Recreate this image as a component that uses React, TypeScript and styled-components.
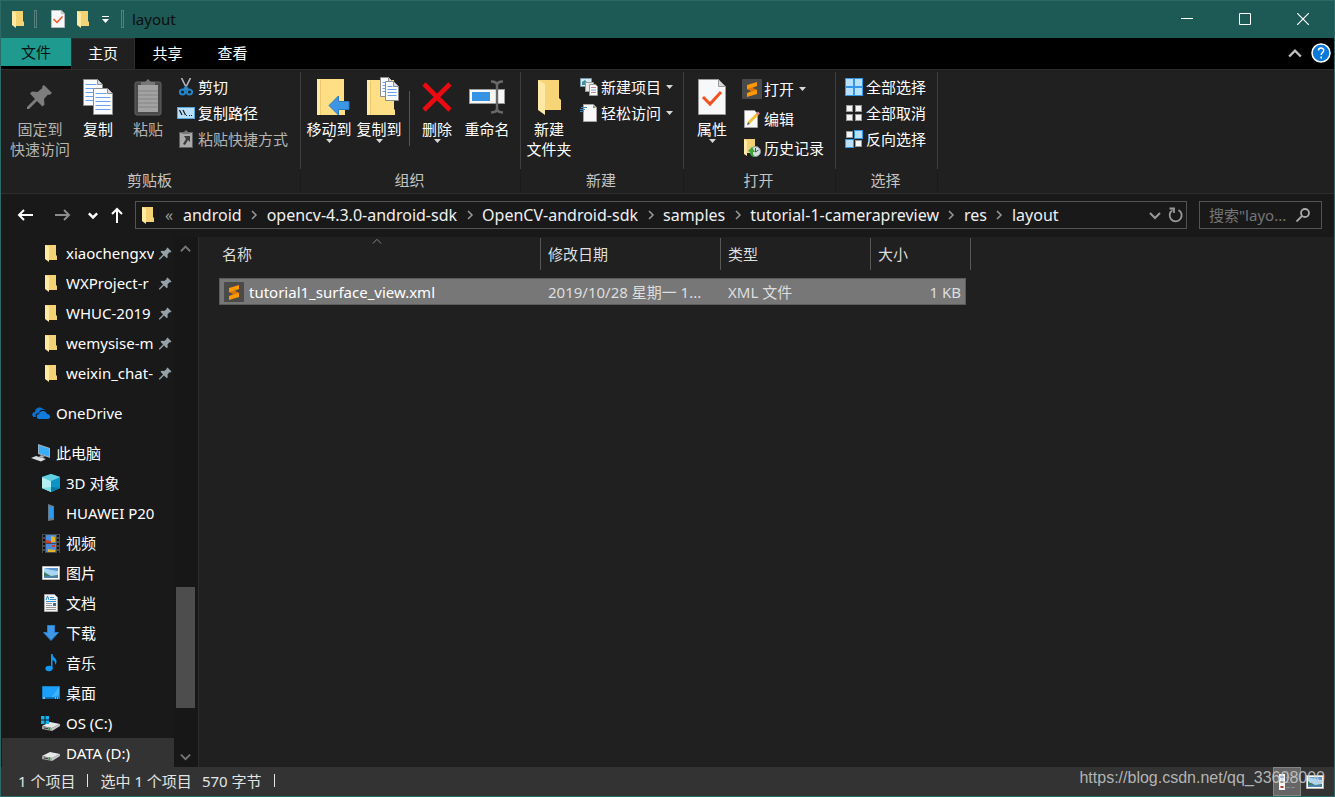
import React from "react";
import styled, { createGlobalStyle, css } from "styled-components";

const GlobalStyle = createGlobalStyle`
  *, *::before, *::after { box-sizing: border-box; }
  body {
    margin: 0;
    background: #202020;
    color: #fff;
    font: 15px/20px "Noto Sans", "Noto Sans CJK SC", sans-serif;
  }
  button, input {
    margin: 0;
    padding: 0;
    border: 0;
    background: none;
    color: inherit;
    font: inherit;
  }
  svg { display: block; flex: none; }
`;

/* ---------- icons ---------- */

const FolderIcon = () => (
  <svg width="14" height="18" viewBox="0 0 14 18">
    <path d="M1 1h11v10l1 1v4H4z" fill="#f5d375" />
    <path d="M1 1l4 2v15l-4-3z" fill="#ffe9a3" />
  </svg>
);

const CheckDocIcon = ({ width = 14, height = 18 }: { width?: number; height?: number }) => (
  <svg width={width} height={height} viewBox="0 0 28 36">
    <path d="M.5.5h20l7 7v28H.5z" fill="#f7f8fa" stroke="#9a9a9a" />
    <path d="M20.500.5v7h7z" fill="#d5d9dc" stroke="#9a9a9a" />
    <path d="M5 18l7 7L23 13" fill="none" stroke="#f4511e" strokeWidth="3" />
  </svg>
);

const Pin = ({ size, color }: { size: number; color: string }) => (
  <svg width={size} height={size} viewBox="0 0 26 26">
    <path
      d="M17 1l8 8-2.500 2-1.500-.5-4 4.500.5 5.500-2 2-5.500-5.500L2 25H0v-2l8-8-5-5.500 2-2 5.500.5 5-4-.5-1.500z"
      fill={color}
    />
  </svg>
);

const PageLines = ({ x, y, w, h, step = 4 }: { x: number; y: number; w: number; h: number; step?: number }) => {
  const lines: number[] = [];
  for (let v = y + 5; v < y + h - 2; v += step) lines.push(v);
  return (
    <g>
      <path d={`M${x} ${y}h${w - 5}l5 5v${h - 5}h-${w}z`} fill="#fafbfc" stroke="#8e8e8e" />
      <path d={`M${x + w - 5} ${y}v5h5`} fill="#d6dade" stroke="#8e8e8e" />
      {lines.map((v) => (
        <path key={v} d={`M${x + 2} ${v}h${v < y + 6 ? w - 8 : w - 4}`} stroke="#6ba0ee" strokeWidth="1" />
      ))}
    </g>
  );
};

const CopyIcon = () => (
  <svg width="32" height="38" viewBox="0 0 32 38">
    <PageLines x={1.5} y={1.5} w={19} h={26} />
    <PageLines x={11.5} y={10.5} w={19} h={26} />
  </svg>
);

const PasteIcon = () => (
  <svg width="28" height="38" viewBox="0 0 28 38">
    <rect x="1" y="4" width="26" height="33" rx="2" fill="#4a4a4a" stroke="#626262" />
    <rect x="4" y="7" width="20" height="27" fill="#a2a2a2" />
    <path d="M4 13h20M4 17h20M4 21h20M4 25h20M4 29h20" stroke="#848484" />
    <path d="M7 7V4h4l3-3 3 3h4v3z" fill="#777" />
  </svg>
);

const ScissorsIcon = () => (
  <svg width="14" height="18" viewBox="0 0 14 18" fill="none">
    <path d="M2.500 0l6 12M11.500 0l-6 12" stroke="#b4bac0" strokeWidth="1.600" />
    <circle cx="3.500" cy="14" r="2.600" stroke="#2186cc" strokeWidth="2" />
    <circle cx="10.500" cy="14" r="2.600" stroke="#2186cc" strokeWidth="2" />
    <path d="M5 11l2-2 2 2" stroke="#2186cc" strokeWidth="2" />
  </svg>
);

const CopyPathIcon = () => (
  <svg width="18" height="12" viewBox="0 0 18 12">
    <rect x=".5" y=".5" width="17" height="11" fill="#b9e0fb" stroke="#5aa7e0" />
    <path d="M2.500 3l2.500 5M6 3l2.500 5" stroke="#222" strokeWidth="1.300" />
    <path d="M9 8h1v1H9zM12 8h1v1h-1zM14 8h1v1h-1z" fill="#222" />
  </svg>
);

const PasteShortcutIcon = () => (
  <svg width="14" height="18" viewBox="0 0 14 18">
    <rect x=".5" y="2.500" width="13" height="15" fill="#aaa" stroke="#5e5e5e" />
    <path d="M3 4V2h2l2-2 2 2h2v2z" fill="#777" />
    <path d="M5 6h6v6L9 10l-3 5-2-1 3-5z" fill="#3b3b3b" />
  </svg>
);

const MoveToIcon = () => (
  <svg width="42" height="38" viewBox="-8 0 42 38">
    <path d="M1 1h27v30l1 1v5H1z" fill="#ffdf86" />
    <path d="M1 1h3v36H1z" fill="#ffeba9" />
    <path d="M4.500 2v35" stroke="#edc86d" />
    <path d="M13 27.500L22.500 18v5.500H33v8H22.500V37z" fill="#3c96e3" stroke="#2779bf" />
  </svg>
);

const CopyToIcon = () => (
  <svg width="42" height="40" viewBox="-8 -1 42 40">
    <path d="M1 2h27v29l1 1v5H1z" fill="#ffdf86" />
    <path d="M1 2h3v35H1z" fill="#ffeba9" />
    <path d="M4.500 3v34" stroke="#edc86d" />
    <PageLines x={14.5} y={-0.5} w={13} h={19} step={3} />
    <PageLines x={19.5} y={3.5} w={13} h={19} step={3} />
  </svg>
);

const DeleteIcon = () => (
  <svg width="30" height="30" viewBox="0 0 30 30">
    <path d="M2 2l26 26M28 2L2 28" stroke="#e90a12" strokeWidth="4.600" />
  </svg>
);

const RenameIcon = () => (
  <svg width="36" height="36" viewBox="0 0 36 36">
    <rect x=".5" y="10.500" width="35" height="14" fill="#f7f7f7" stroke="#999" />
    <rect x="3" y="13" width="18" height="9" fill="#3592e4" />
    <path
      d="M22 2.500c4 0 6 1 6 4v23c0 3-2 4-6 4M34 2.500c-4 0-6 1-6 4M28 29.500c0 3 2 4 6 4"
      fill="none"
      stroke="#686868"
      strokeWidth="2.400"
    />
  </svg>
);

const NewFolderIcon = () => (
  <svg width="24" height="36" viewBox="0 0 24 36">
    <path d="M1 1h21v18l2 2v10H7z" fill="#f7d577" />
    <path d="M1 1l7 4v31l-7-5z" fill="#ffe9a4" />
  </svg>
);

const NewItemIcon = () => (
  <svg width="18" height="18" viewBox="0 0 18 18">
    <path d="M.5.5h11v8H.5z" fill="#d3e9f6" stroke="#7799ac" />
    <path d="M2 7V4l3-2 4 5z" fill="#418d9c" />
    <path d="M5.500 4.500h8v9h-8z" fill="#e9e9e9" stroke="#999" />
    <path d="M9.500 6.500h6l2 2v9h-8z" fill="#fafafa" stroke="#999" />
    <path d="M11 9.500h5M11 14.500h5" stroke="#d28292" />
    <path d="M11 12h5" stroke="#79a6dd" />
  </svg>
);

const EasyAccessIcon = () => (
  <svg width="18" height="18" viewBox="0 0 18 18">
    <path d="M3.500.5h10l3 3v14h-13z" fill="#f8f8f8" stroke="#a4a4a4" />
    <path d="M13 1v3h3z" fill="#888" />
    <path d="M1 3.500h6M0 5.500h5M0 7.500h4" stroke="#3a86bd" />
  </svg>
);

const SublimeIcon = () => (
  <svg width="20" height="20" viewBox="0 0 20 20">
    <rect width="20" height="20" rx="1" fill="#4a4a4a" />
    <path d="M15 3v4l-5 2 5 2v4L5 18v-4l5-2-5-2V6z" fill="#ff9800" />
    <path d="M5 10l5-1.500 5 2.500-5 1.500z" fill="#d97706" />
  </svg>
);

const EditIcon = () => (
  <svg width="18" height="18" viewBox="0 0 18 18">
    <path d="M1.500.5h10l3 3v14h-13z" fill="#fafafa" stroke="#a0a0a0" />
    <path d="M4.500 14.500l1-3.500 8-8 2 2-8 8z" fill="#f3c32f" />
    <path d="M13 3.500l2-2 2 2-2 2z" fill="#d8848c" />
    <path d="M4 15l1-3 2 2z" fill="#555" />
  </svg>
);

const HistoryIcon = () => (
  <svg width="18" height="18" viewBox="0 0 18 18">
    <path d="M1 0h11v14H4z" fill="#f2d074" />
    <path d="M1 0l3 2v15l-3-2z" fill="#ffe9a4" />
    <circle cx="12.500" cy="12.500" r="5" fill="#d9dcde" stroke="#899" />
    <path d="M12.500 9v4l3-2" fill="none" stroke="#456" />
    <path d="M9 8l-4 4 2 1c0 3 2 5 5 5-2-2-2-3-2-5h2z" fill="#3ba63b" />
  </svg>
);

const SelectIcon = ({ on }: { on: boolean[] }) => (
  <svg width="18" height="18" viewBox="0 0 18 18">
    {on.map((blue, i) => {
      const x = (i % 2) * 9;
      const y = Math.floor(i / 2) * 9;
      return blue ? (
        <rect key={i} x={x + 0.5} y={y + 0.5} width="8" height="8" fill="#b8e0fc" stroke="#3397e6" />
      ) : (
        <rect key={i} x={x + 1.5} y={y + 1.5} width="6" height="6" fill="#f6f6f6" stroke="#999" />
      );
    })}
  </svg>
);

const HelpIcon = () => (
  <svg width="20" height="20" viewBox="0 0 20 20">
    <circle cx="10" cy="10" r="9" fill="#0a78d8" stroke="#fff" strokeWidth="1.500" />
    <path
      d="M7.500 7.500C7.500 4.300 12.700 4.300 12.700 7.400c0 2-2.500 2.300-2.500 4.600M10.200 13.500v2"
      fill="none"
      stroke="#fff"
      strokeWidth="1.500"
    />
  </svg>
);

type ChevronProps = { dir: "up" | "down" | "right"; size?: number; color?: string; weight?: number };

const Chevron = ({ dir, size = 12, color = "#fff", weight = 2 }: ChevronProps) => (
  <svg width={size} height={size} viewBox="0 0 12 12" fill="none" stroke={color} strokeWidth={weight}>
    <path d={{ up: "M1 9l5-5 5 5", down: "M1 4l5 5 5-5", right: "M4 2l4 4-4 4" }[dir]} />
  </svg>
);

const ArrowIcon = ({ dir, color = "#fff" }: { dir: "left" | "right" | "up"; color?: string }) => (
  <svg width="16" height="16" viewBox="0 0 16 16" fill="none" stroke={color} strokeWidth="2">
    <path d={{ left: "M16 8H2M7 3L2 8l5 5", right: "M0 8h14M9 3l5 5-5 5", up: "M8 16V2M3 7l5-5 5 5" }[dir]} />
  </svg>
);

const Triangle = () => (
  <svg width="7" height="4" viewBox="0 0 7 4">
    <path d="M0 0h7L3.500 4z" fill="#d8d8d8" />
  </svg>
);

const OneDriveIcon = () => (
  <svg width="18" height="12" viewBox="0 0 18 12">
    <path d="M4 10H2C-1 9 0 5 3 5c0-4 5-6 8-3 1 0 2 0 2 1-4-1-6 1-6 3-3 0-4 2-3 4z" fill="#0a6fcf" />
    <path d="M7 12c-3 0-3-5 0-5 1-4 7-4 8 0 4 0 4 5 1 5z" fill="#0f7be0" />
  </svg>
);

const ComputerIcon = () => (
  <svg width="20" height="18" viewBox="0 0 20 18">
    <path d="M7 0l12 4v10L7 10z" fill="#9bb0bd" />
    <path d="M8 1.500l10 3.300v7.700L8 9.200z" fill="#38aefb" />
    <path d="M0 14l5-2 10 3-5 2.500z" fill="#d9dde0" />
    <path d="M10 11l4 2-3 1-3-1z" fill="#aab3b9" />
  </svg>
);

const CubeIcon = () => (
  <svg width="18" height="18" viewBox="0 0 18 18">
    <path d="M9 0l9 3v11l-9 4-9-4V3z" fill="#34b4d4" />
    <path d="M0 3l9 4v11l-9-4z" fill="#b5eef0" />
    <path d="M18 3L9 7v11l9-4z" fill="#0d94c6" />
    <path d="M9 0l9 3-9 4-9-4z" fill="#62d0e2" />
    <path d="M9 13l-9 1 9 4z" fill="#7ddfe4" />
    <path d="M9 13l9 1-9 4z" fill="#0878a6" />
  </svg>
);

const PhoneIcon = () => (
  <svg width="8" height="18" viewBox="0 0 8 18">
    <path d="M1 0l6 2v14l-6 1z" fill="#687884" />
    <path d="M2 2l4 1v11l-4 1z" fill="#269bf5" />
  </svg>
);

const VideoIcon = () => (
  <svg width="18" height="19" viewBox="0 0 18 19">
    <path d="M0 0h18v19H0z" fill="#4c4c4c" />
    <path d="M4 1h10v8H4zM4 10h10v8H4z" fill="#4b8bdc" />
    <path d="M9 2l4 1v5H9z" fill="#e0b52a" />
    <path d="M4 6l5 1v2H4zM10 11h3v2h-3z" fill="#c83c2c" />
    <path d="M6 15l7 1v2H6z" fill="#ddb52e" />
    <path d="M2 1v18M16 1v18" stroke="#101010" strokeWidth="2" strokeDasharray="2 2" />
  </svg>
);

const PictureIcon = () => (
  <svg width="18" height="14" viewBox="0 0 18 14">
    <path d="M.5.5h17v13H.5z" fill="#fff" stroke="#bbb" />
    <path d="M2 2h14v10H2z" fill="#a9d6f5" />
    <path d="M2 2h14v3L9 4z" fill="#5796d2" />
    <path d="M2 6l7 4 7-1v1H2z" fill="#3f7c61" />
    <path d="M2 10h14v2H2z" fill="#4c83ad" />
  </svg>
);

const DocumentIcon = () => (
  <svg width="14" height="18" viewBox="0 0 14 18">
    <path d="M.5.5h10l3 3v14H.5z" fill="#f4f4f4" stroke="#aaa" />
    <path d="M6 3.500h4M6 5.500h6M2 7.500h10" stroke="#2e91d3" />
    <path d="M2 6l1.500-4L5 6" fill="none" stroke="#2e91d3" />
    <path d="M2 9.500h6M2 11.500h6M2 13.500h10M2 15.500h10" stroke="#999" />
    <path d="M9 9h3v3H9z" fill="#3f6e8e" />
  </svg>
);

const DownloadIcon = () => (
  <svg width="16" height="16" viewBox="0 0 16 16">
    <path d="M4.500.5h7v7h4L8 15.500.5 7.500h4z" fill="#3f97e8" stroke="#2b7cc9" />
  </svg>
);

const MusicIcon = () => (
  <svg width="12" height="18" viewBox="0 0 12 18">
    <ellipse cx="4" cy="14.500" rx="3.600" ry="2.800" fill="#0f9bf5" />
    <path d="M6 0h1.500c.5 4 4.500 4 4 8-.2 1.500-.8 2-1.500 3 .5-3-.5-4-2.500-5v9H6z" fill="#0f9bf5" />
  </svg>
);

const DesktopIcon = () => (
  <svg width="18" height="14" viewBox="0 0 18 14">
    <path d="M.5.5h17v12H.5z" fill="#1aa0fb" stroke="#1580cc" />
    <path d="M17 1v8L9 12 17 1z" fill="#41b2ff" />
    <path d="M1 12h16" stroke="#064a80" />
    <path d="M1 12h2M13 12h1M15 12h1" stroke="#fff" />
  </svg>
);

const DriveIcon = ({ windows = false }: { windows?: boolean }) => (
  <svg width="20" height="16" viewBox="0 0 20 16">
    <path d="M1 11l8-4 10 2-8 4z" fill="#e6e8ea" />
    <path d="M1 11l10 2v3L1 14z" fill="#a3a6a9" />
    <path d="M11 13l8-4v2l-8 5z" fill="#c6c9cc" />
    <path d="M3 12.500l6 1v1l-6-1z" fill="#353535" />
    <path d="M7 13h1v1H7z" fill="#3fd04a" />
    {windows && <path d="M0 1h3.500v3.500H0zM4.500 1H8v3.500H4.500zM0 5.500h3.500V9H0zM4.500 5.500H8V9H4.500z" fill="#15b2f0" />}
  </svg>
);

/* ---------- window frame ---------- */

const Window = styled.div`
  position: relative;
  display: flex;
  flex-direction: column;
  height: 100vh;
  min-height: 600px;
  border: 1px solid #2b6a66;
  background: #202020;
  overflow: hidden;
`;

const TitleBar = styled.header`
  display: flex;
  align-items: center;
  flex: none;
  height: 37px;
  padding: 0 2px 1px 9px;
  background: #1d5955;
`;

const QuickButton = styled.button<{ $width: number }>`
  display: flex;
  align-items: center;
  justify-content: center;
  width: ${(p) => p.$width}px;
  height: 100%;
`;

const TitleRule = styled.span`
  width: 3px;
  height: 18px;
  border: 1px solid #56817e;
`;

const TitleText = styled.h1`
  flex: 1;
  margin: 0 0 0 4px;
  color: #0c0f0f;
  font-size: 15px;
  font-weight: 400;
`;

const WindowButton = styled.button`
  display: flex;
  align-items: center;
  justify-content: center;
  width: 58px;
  height: 100%;
`;

const TabBar = styled.nav`
  display: flex;
  align-items: flex-start;
  flex: none;
  height: 31px;
  background: #000;
`;

const Tab = styled.button<{ $kind?: "file" | "active" }>`
  width: 65px;
  height: 31px;
  padding-bottom: 2px;
  border: 1px solid transparent;
  border-bottom: 0;
  ${(p) =>
    p.$kind === "file" &&
    css`
      width: 70px;
      height: 28px;
      background: #1f9a8e;
      color: #041413;
    `}
  ${(p) =>
    p.$kind === "active" &&
    css`
      width: 64px;
      border-color: #2d2d2d;
      background: #202020;
    `}
`;

const TabTools = styled.div`
  display: flex;
  align-items: center;
  gap: 9px;
  height: 100%;
  margin-left: auto;
  padding: 0 3px 1px 0;
`;

const IconButton = styled.button`
  display: flex;
  align-items: center;
  justify-content: center;
`;

/* ---------- ribbon ---------- */

const Ribbon = styled.section`
  display: flex;
  flex: none;
  height: 125px;
  border-top: 1px solid #2d2d2d;
  border-bottom: 1px solid #2d2d2d;
  background: #202020;
`;

const Group = styled.div<{ $width: number }>`
  display: flex;
  flex-direction: column;
  width: ${(p) => p.$width}px;
  padding-top: 2px;
`;

const GroupBody = styled.div<{ $inset?: number }>`
  display: flex;
  align-items: flex-start;
  height: 97px;
  padding-left: ${(p) => p.$inset ?? 3}px;
  border-right: 1px solid #404040;
`;

const GroupLabel = styled.div`
  height: 22px;
  padding-right: 2px;
  border-right: 1px solid #1a1a1a;
  color: #c4c4c4;
  line-height: 22px;
  text-align: center;
`;

const LargeButton = styled.button<{ $width?: number; $muted?: boolean }>`
  display: flex;
  flex-direction: column;
  align-items: center;
  width: ${(p) => p.$width ?? 50}px;
  padding-top: 3px;
  color: ${(p) => (p.$muted ? "#b4b4b4" : "#fff")};
  white-space: nowrap;
`;

const LargeArt = styled.span`
  display: flex;
  align-items: center;
  justify-content: center;
  height: 44px;
`;

const BodyRule = styled.span`
  width: 1px;
  height: 55px;
  margin: 19px 2px 0 5px;
  background: #555;
`;

const Commands = styled.div<{ $inset?: number }>`
  display: flex;
  flex-direction: column;
  margin-left: ${(p) => p.$inset ?? 5}px;
  padding-top: 2px;
`;

const Command = styled.button<{ $muted?: boolean; $height?: number }>`
  display: flex;
  align-items: center;
  gap: 2px;
  height: ${(p) => p.$height ?? 26}px;
  color: ${(p) => (p.$muted ? "#b4b4b4" : "#fff")};
  white-space: nowrap;

  > svg { margin-left: 3px; }
`;

const IconSlot = styled.span`
  display: flex;
  align-items: center;
  justify-content: center;
  flex: none;
  width: 20px;
`;

/* ---------- address row ---------- */

const NavBar = styled.div`
  display: flex;
  align-items: center;
  flex: none;
  height: 43px;
  padding: 0 12px 2px 8px;
  background: #191919;
`;

const NavButton = styled.button<{ $width: number }>`
  display: flex;
  align-items: center;
  justify-content: center;
  flex: none;
  width: ${(p) => p.$width}px;
  height: 28px;
`;

const AddressBox = styled.div`
  display: flex;
  align-items: center;
  flex: 1;
  height: 28px;
  margin-left: 2px;
  padding-left: 5px;
  border: 1px solid #535353;
`;

const Crumbs = styled.div`
  display: flex;
  align-items: center;
  flex: 1;
  color: #f0f0f0;
  font-size: 16px;
  white-space: nowrap;
`;

const CrumbMark = styled.span<{ $width?: number }>`
  display: flex;
  justify-content: center;
  width: ${(p) => p.$width ?? 25}px;
  color: #9a9a9a;
`;

const AddressButton = styled.button`
  display: flex;
  align-items: center;
  justify-content: center;
  width: 21px;
  height: 26px;
`;

const SearchBox = styled.label`
  display: flex;
  align-items: center;
  width: 123px;
  height: 28px;
  margin-left: 12px;
  padding: 0 11px 0 9px;
  border: 1px solid #535353;
`;

const SearchInput = styled.input`
  flex: 1;
  min-width: 0;
  outline: 0;
  &::placeholder { color: #757575; opacity: 1; }
`;

/* ---------- main area ---------- */

const Main = styled.div`
  display: flex;
  flex: 1;
  min-height: 0;
`;

const Sidebar = styled.nav`
  display: flex;
  flex-direction: column;
  width: 173px;
  padding: 1px 0 0 1px;
  background: #191919;
  overflow: hidden;
`;

const SideItem = styled.button<{ $root?: boolean; $active?: boolean }>`
  display: flex;
  align-items: center;
  flex: none;
  gap: 5px;
  width: 100%;
  height: 30px;
  margin-top: ${(p) => (p.$root ? 10 : 0)}px;
  padding-left: ${(p) => (p.$root ? 29 : 39)}px;
  background: ${(p) => (p.$active ? "#333" : "transparent")};
  white-space: nowrap;
`;

const PinnedName = styled.span`
  width: 88px;
  overflow: hidden;
  text-align: left;
`;

const ScrollBar = styled.div`
  display: flex;
  flex-direction: column;
  align-items: center;
  width: 24px;
  padding: 0 3px 0 2px;
  background: #171717;
`;

const ScrollArrow = styled.button`
  display: flex;
  align-items: center;
  justify-content: center;
  width: 100%;
  height: 22px;
`;

const ScrollSpace = styled.span<{ $grow: number }>`
  flex: ${(p) => p.$grow} 0 0;
`;

const ScrollThumb = styled.span`
  width: 100%;
  height: 121px;
  background: #4d4d4d;
`;

const Content = styled.main`
  flex: 1;
  padding-left: 20px;
  border-left: 1px solid #2d2d2d;
  background: #202020;
`;

const FileTable = styled.table`
  display: block;
  padding-top: 1px;

  thead, tbody { display: block; }
  thead tr { display: grid; grid-template-columns: 322px 180px 150px 100px; }
  tbody tr {
    display: grid;
    grid-template-columns: 321px 180px 150px 94px;
    width: 747px;
    margin-top: 8px;
    border: 1px solid #5c5c5c;
    background: #777;
  }
`;

const HeadCell = styled.th<{ $inset?: number }>`
  position: relative;
  height: 32px;
  padding: 0 0 0 ${(p) => p.$inset ?? 7}px;
  border-right: 1px solid #575757;
  color: #dedede;
  font-weight: 400;
  line-height: 32px;
  text-align: left;
`;

const SortMark = styled.span`
  position: absolute;
  top: -2px;
  left: 0;
  right: 5px;
  display: flex;
  justify-content: center;
`;

const Cell = styled.td<{ $name?: boolean; $end?: boolean }>`
  display: flex;
  align-items: center;
  justify-content: ${(p) => (p.$end ? "flex-end" : "flex-start")};
  gap: 5px;
  height: 25px;
  padding: 0 4px 0 ${(p) => (p.$name ? 4 : 7)}px;
  color: ${(p) => (p.$name ? "#fff" : "#dedede")};
  white-space: nowrap;
`;

/* ---------- status bar ---------- */

const StatusBar = styled.footer`
  display: flex;
  align-items: center;
  flex: none;
  height: 29px;
  padding-left: 17px;
  background: #333;
  color: #e4e4e4;
`;

const StatusInfo = styled.div`
  display: flex;
  align-items: center;
  padding-bottom: 2px;
`;

const StatusRule = styled.span`
  width: 1px;
  height: 13px;
  margin: 0 12px;
  background: #e4e4e4;
`;

const StatusGap = styled.span`
  width: 10px;
`;

const ViewSwitch = styled.div`
  display: flex;
  align-items: stretch;
  height: 100%;
  margin-left: auto;
  padding-right: 5px;
`;

const ViewButton = styled.button<{ $active?: boolean }>`
  display: flex;
  align-items: center;
  justify-content: center;
  width: 28px;
  background: ${(p) => (p.$active ? "#666" : "transparent")};
  border: 1px solid ${(p) => (p.$active ? "#858585" : "transparent")};
`;

const Watermark = styled.span`
  position: absolute;
  right: 9px;
  bottom: 8px;
  color: rgba(205, 205, 205, 0.85);
  font: 16px/20px "Liberation Sans", sans-serif;
  pointer-events: none;
`;

/* ---------- data ---------- */

const crumbs = ["android", "opencv-4.3.0-android-sdk", "OpenCV-android-sdk", "samples", "tutorial-1-camerapreview", "res", "layout"];

const pinned = ["xiaochengxv", "WXProject-r", "WHUC-2019", "wemysise-m", "weixin_chat-"];

const places: { name: string; icon: React.ReactNode; root?: boolean; active?: boolean }[] = [
  { name: "OneDrive", icon: <OneDriveIcon />, root: true },
  { name: "此电脑", icon: <ComputerIcon />, root: true },
  { name: "3D 对象", icon: <CubeIcon /> },
  { name: "HUAWEI P20", icon: <PhoneIcon /> },
  { name: "视频", icon: <VideoIcon /> },
  { name: "图片", icon: <PictureIcon /> },
  { name: "文档", icon: <DocumentIcon /> },
  { name: "下载", icon: <DownloadIcon /> },
  { name: "音乐", icon: <MusicIcon /> },
  { name: "桌面", icon: <DesktopIcon /> },
  { name: "OS (C:)", icon: <DriveIcon windows /> },
  { name: "DATA (D:)", icon: <DriveIcon />, active: true },
];

/* ---------- composed parts ---------- */

type LargeProps = { icon: React.ReactNode; lines: string[]; menu?: boolean; width?: number; muted?: boolean };

const Large = ({ icon, lines, menu, width, muted }: LargeProps) => (
  <LargeButton $width={width} $muted={muted}>
    <LargeArt>{icon}</LargeArt>
    {lines.map((line) => (
      <span key={line}>{line}</span>
    ))}
    {menu && <Triangle />}
  </LargeButton>
);

type SmallProps = { icon: React.ReactNode; text: string; menu?: boolean; muted?: boolean; height?: number };

const Small = ({ icon, text, menu, muted, height }: SmallProps) => (
  <Command $muted={muted} $height={height}>
    <IconSlot>{icon}</IconSlot>
    <span>{text}</span>
    {menu && <Triangle />}
  </Command>
);

export default function App() {
  return (
    <>
      <GlobalStyle />
      <Window>
        <TitleBar>
          <QuickButton $width={16} aria-label="窗口菜单"><FolderIcon /></QuickButton>
          <QuickButton as="span" $width={19}><TitleRule /></QuickButton>
          <QuickButton $width={26} aria-label="属性"><CheckDocIcon /></QuickButton>
          <QuickButton $width={24} aria-label="新建文件夹"><FolderIcon /></QuickButton>
          <QuickButton $width={21} aria-label="自定义快速访问工具栏">
            <svg width="7" height="7" viewBox="0 0 7 7"><path d="M0 0h7v1H0zM0 3h7L3.500 7z" fill="#fff" /></svg>
          </QuickButton>
          <QuickButton as="span" $width={12}><TitleRule /></QuickButton>
          <TitleText>layout</TitleText>
          <WindowButton aria-label="最小化">
            <svg width="12" height="12" viewBox="0 0 12 12"><path d="M0 5.500h12" stroke="#fff" /></svg>
          </WindowButton>
          <WindowButton aria-label="最大化">
            <svg width="12" height="12" viewBox="0 0 12 12"><path d="M.5.5h11v11H.5z" fill="none" stroke="#fff" /></svg>
          </WindowButton>
          <WindowButton aria-label="关闭">
            <svg width="12" height="12" viewBox="0 0 12 12"><path d="M0 0l12 12M12 0L0 12" stroke="#fff" strokeWidth="1.200" /></svg>
          </WindowButton>
        </TitleBar>

        <TabBar>
          <Tab $kind="file">文件</Tab>
          <Tab $kind="active">主页</Tab>
          <Tab>共享</Tab>
          <Tab>查看</Tab>
          <TabTools>
            <IconButton aria-label="折叠功能区"><Chevron dir="up" size={14} color="#c0c0c0" /></IconButton>
            <IconButton aria-label="帮助"><HelpIcon /></IconButton>
          </TabTools>
        </TabBar>

        <Ribbon>
          <Group $width={300}>
            <GroupBody $inset={6}>
              <Large icon={<Pin size={26} color="#7d7d7d" />} lines={["固定到", "快速访问"]} width={66} muted />
              <Large icon={<CopyIcon />} lines={["复制"]} />
              <Large icon={<PasteIcon />} lines={["粘贴"]} muted />
              <Commands $inset={3}>
                <Small icon={<ScissorsIcon />} text="剪切" />
                <Small icon={<CopyPathIcon />} text="复制路径" />
                <Small icon={<PasteShortcutIcon />} text="粘贴快捷方式" muted />
              </Commands>
            </GroupBody>
            <GroupLabel>剪贴板</GroupLabel>
          </Group>
          <Group $width={220}>
            <GroupBody>
              <Large icon={<MoveToIcon />} lines={["移动到"]} menu />
              <Large icon={<CopyToIcon />} lines={["复制到"]} menu />
              <BodyRule />
              <Large icon={<DeleteIcon />} lines={["删除"]} menu />
              <Large icon={<RenameIcon />} lines={["重命名"]} />
            </GroupBody>
            <GroupLabel>组织</GroupLabel>
          </Group>
          <Group $width={163}>
            <GroupBody>
              <Large icon={<NewFolderIcon />} lines={["新建", "文件夹"]} />
              <Commands>
                <Small icon={<NewItemIcon />} text="新建项目" menu />
                <Small icon={<EasyAccessIcon />} text="轻松访问" menu />
              </Commands>
            </GroupBody>
            <GroupLabel>新建</GroupLabel>
          </Group>
          <Group $width={152}>
            <GroupBody>
              <Large icon={<CheckDocIcon width={28} height={36} />} lines={["属性"]} menu />
              <Commands>
                <Small icon={<SublimeIcon />} text="打开" menu height={30} />
                <Small icon={<EditIcon />} text="编辑" height={29} />
                <Small icon={<HistoryIcon />} text="历史记录" height={29} />
              </Commands>
            </GroupBody>
            <GroupLabel>打开</GroupLabel>
          </Group>
          <Group $width={102}>
            <GroupBody>
              <Commands>
                <Small icon={<SelectIcon on={[true, true, true, true]} />} text="全部选择" />
                <Small icon={<SelectIcon on={[false, false, false, false]} />} text="全部取消" />
                <Small icon={<SelectIcon on={[false, true, true, false]} />} text="反向选择" />
              </Commands>
            </GroupBody>
            <GroupLabel>选择</GroupLabel>
          </Group>
        </Ribbon>

        <NavBar>
          <NavButton $width={32} aria-label="后退"><ArrowIcon dir="left" /></NavButton>
          <NavButton $width={44} aria-label="前进"><ArrowIcon dir="right" color="#8c8c8c" /></NavButton>
          <NavButton $width={16} aria-label="最近浏览的位置"><Chevron dir="down" size={10} weight={3} /></NavButton>
          <NavButton $width={32} aria-label="上移"><ArrowIcon dir="up" /></NavButton>
          <AddressBox>
            <FolderIcon />
            <Crumbs>
              <CrumbMark $width={28}>«</CrumbMark>
              {crumbs.map((name, i) => (
                <React.Fragment key={name}>
                  {i > 0 && <CrumbMark><Chevron dir="right" color="#9a9a9a" weight={1.5} /></CrumbMark>}
                  <button>{name}</button>
                </React.Fragment>
              ))}
            </Crumbs>
            <AddressButton aria-label="以前的位置"><Chevron dir="down" color="#999" /></AddressButton>
            <AddressButton aria-label="刷新">
              <svg width="16" height="16" viewBox="0 0 16 16" fill="none" stroke="#999" strokeWidth="1.800">
                <path d="M10.500 3A6 6 0 1 1 4.500 3.200M1.500 1.500h4.500v4.500" />
              </svg>
            </AddressButton>
          </AddressBox>
          <SearchBox>
            <SearchInput aria-label="搜索" placeholder={'搜索"layo...'} />
            <svg width="14" height="14" viewBox="0 0 14 14" fill="none" stroke="#aaa" strokeWidth="1.800">
              <circle cx="9" cy="5" r="4" />
              <path d="M6 8l-5.500 5.500" />
            </svg>
          </SearchBox>
        </NavBar>

        <Main>
          <Sidebar>
            {pinned.map((name) => (
              <SideItem key={name}>
                <IconSlot><FolderIcon /></IconSlot>
                <PinnedName>{name}</PinnedName>
                <Pin size={13} color="#95a0a8" />
              </SideItem>
            ))}
            {places.map((p) => (
              <SideItem key={p.name} $root={p.root} $active={p.active}>
                <IconSlot>{p.icon}</IconSlot>
                <span>{p.name}</span>
              </SideItem>
            ))}
          </Sidebar>
          <ScrollBar>
            <ScrollArrow aria-label="向上滚动"><Chevron dir="up" size={11} color="#777" /></ScrollArrow>
            <ScrollSpace $grow={328} />
            <ScrollThumb />
            <ScrollSpace $grow={37} />
            <ScrollArrow aria-label="向下滚动"><Chevron dir="down" size={11} color="#777" /></ScrollArrow>
          </ScrollBar>
          <Content>
            <FileTable>
              <thead>
                <tr>
                  <HeadCell $inset={3}>
                    名称
                    <SortMark><Chevron dir="up" size={10} color="#999" weight={1} /></SortMark>
                  </HeadCell>
                  <HeadCell>修改日期</HeadCell>
                  <HeadCell>类型</HeadCell>
                  <HeadCell>大小</HeadCell>
                </tr>
              </thead>
              <tbody>
                <tr>
                  <Cell $name><SublimeIcon />tutorial1_surface_view.xml</Cell>
                  <Cell>2019/10/28 星期一 1...</Cell>
                  <Cell>XML 文件</Cell>
                  <Cell $end>1 KB</Cell>
                </tr>
              </tbody>
            </FileTable>
          </Content>
        </Main>

        <StatusBar>
          <StatusInfo>
            <span>1 个项目</span>
            <StatusRule />
            <span>选中 1 个项目</span>
            <StatusGap />
            <span>570 字节</span>
            <StatusRule />
          </StatusInfo>
          <ViewSwitch>
            <ViewButton $active aria-label="详细信息">
              <svg width="16" height="18" viewBox="0 0 16 18">
                <path d="M0 1h6v16H0z" fill="#f4f4f4" />
                <path d="M1.500 3h3v2h-3z" fill="#4b7fb8" />
                <path d="M1.500 8h3v2h-3z" fill="#9a8452" />
                <path d="M1.500 13h3v2h-3z" fill="#b5382c" />
                <path d="M7 4.500h4M12 4.500h4M7 9.500h4M12 9.500h4M7 14.500h4M12 14.500h4" stroke="#8c8c8c" />
              </svg>
            </ViewButton>
            <ViewButton aria-label="大图标"><PictureIcon /></ViewButton>
          </ViewSwitch>
        </StatusBar>
        <Watermark>https://blog.csdn.net/qq_33608000</Watermark>
      </Window>
    </>
  );
}
